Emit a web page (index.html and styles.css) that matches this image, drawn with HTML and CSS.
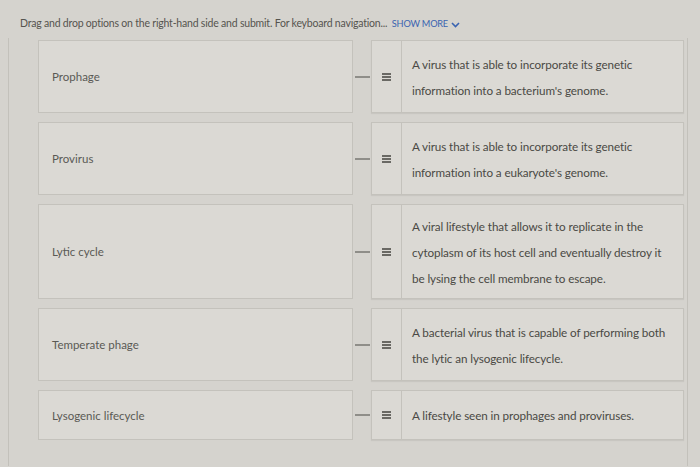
FILE: index.html
```html
<!DOCTYPE html>
<html lang="en">
<head>
<meta charset="utf-8">
<link rel="stylesheet" href="styles.css">
</head>
<body>
<div class="prompt">Drag and drop options on the right-hand side and submit. For keyboard navigation... <span class="more">SHOW MORE <svg class="chev" width="9" height="6" viewBox="0 0 9 6"><path d="M1 1l3.5 3.5L8 1" fill="none" stroke="#3a63b0" stroke-width="1.6"/></svg></span></div>
<div class="board">
  <div class="row h1">
    <div class="term">Prophage</div>
    <div class="link"></div>
    <div class="card"><div class="handle"><span class="grip"></span></div><div class="def">A virus that is able to incorporate its genetic<br>information into a bacterium's genome.</div></div>
  </div>
  <div class="row h1">
    <div class="term">Provirus</div>
    <div class="link"></div>
    <div class="card"><div class="handle"><span class="grip"></span></div><div class="def">A virus that is able to incorporate its genetic<br>information into a eukaryote's genome.</div></div>
  </div>
  <div class="row h3">
    <div class="term">Lytic cycle</div>
    <div class="link"></div>
    <div class="card"><div class="handle"><span class="grip"></span></div><div class="def">A viral lifestyle that allows it to replicate in the<br>cytoplasm of its host cell and eventually destroy it<br>be lysing the cell membrane to escape.</div></div>
  </div>
  <div class="row h1">
    <div class="term">Temperate phage</div>
    <div class="link"></div>
    <div class="card"><div class="handle"><span class="grip"></span></div><div class="def">A bacterial virus that is capable of performing both<br>the lytic an lysogenic lifecycle.</div></div>
  </div>
  <div class="row h5">
    <div class="term">Lysogenic lifecycle</div>
    <div class="link"></div>
    <div class="card"><div class="handle"><span class="grip"></span></div><div class="def">A lifestyle seen in prophages and proviruses.</div></div>
  </div>
</div>
</body>
</html>
```
FILE: styles.css
```css
html, body {
  margin: 0;
  padding: 0;
}
body {
  background: #d5d3ce;
  font-family: Lato, "Open Sans", sans-serif;
  color: #55544f;
  width: 700px;
  height: 467px;
  overflow: hidden;
}
.prompt {
  font-size: 10.5px;
  padding: 16px 0 0 20px;
  height: 16px;
  line-height: 14px;
  color: #55544f;
  letter-spacing: -0.2px;
}
.more {
  color: #3a63b0;
  font-size: 9.2px;
  margin-left: 2px;
}
.chev {
  vertical-align: middle;
  margin-left: 1px;
}
.board {
  margin: 6px 12px 0 8px;
  border-left: 1px solid #c3c1bb;
  border-right: 1px solid #c3c1bb;
  padding: 2px 0 16px 29px;
  display: flex;
  flex-direction: column;
  gap: 9px;
  height: 410px;
}
.row {
  display: flex;
  align-items: stretch;
  height: 73px;
}
.row.h3 { height: 95px; }
.row.h5 { height: 50px; }
.term {
  width: 300px;
  border: 1px solid #c4c2bc;
  background: #dbd9d4;
  display: flex;
  align-items: center;
  padding-left: 13px;
  font-size: 11.5px;
  color: #5a5954;
}
.link {
  width: 18px;
  display: flex;
  align-items: center;
  justify-content: center;
}
.link::before {
  content: "";
  width: 15px;
  height: 2px;
  background: #8f8e89;
}
.card {
  width: 311px;
  border: 1px solid #c4c2bc;
  background: #dbd9d4;
  display: flex;
  box-shadow: 0 1px 1px rgba(0,0,0,0.06);
}
.handle {
  width: 29px;
  border-right: 1px solid #c4c2bc;
  display: flex;
  align-items: center;
  justify-content: center;
}
.grip {
  width: 9px;
  height: 8px;
  background: linear-gradient(#6a6964 0 2px, transparent 2px 3px, #6a6964 3px 5px, transparent 5px 6px, #6a6964 6px 8px);
}
.def {
  flex: 1;
  display: flex;
  align-items: center;
  padding-left: 10px;
  font-size: 11.7px;
  line-height: 26px;
  color: #4a4944;
  letter-spacing: -0.1px;
}
```
